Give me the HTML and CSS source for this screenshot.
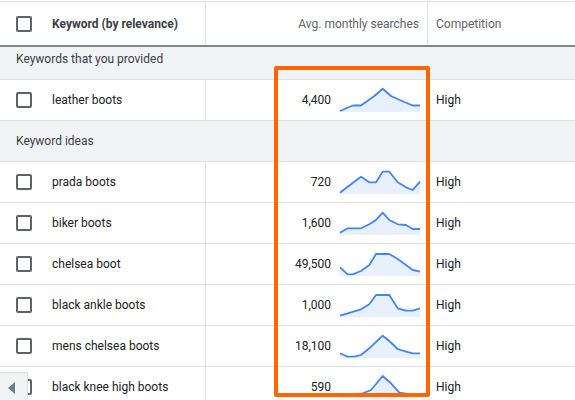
FILE: index.html
```html
<!DOCTYPE html>
<html lang="en">
<head>
<meta charset="UTF-8">
<title>Keyword ideas</title>
<link rel="stylesheet" href="styles.css">
</head>
<body>

<div class="table">
    <div class="row head">
        <div class="cell check"><span class="box"></span></div>
        <div class="cell kw">Keyword (by relevance)</div>
        <div class="cell searches">Avg. monthly searches</div>
        <div class="cell comp">Competition</div>
    </div>

    <div class="group first">Keywords that you provided</div>
    <div class="row">
        <div class="cell check"><span class="box"></span></div>
        <div class="cell kw">leather boots</div>
        <div class="cell searches">
            <span class="num">4,400</span>
            <svg class="spark" viewBox="0 0 80 24"><polygon points="0,23 12.7,17.5 21,17.5 34.3,8 42.7,0.8 51,8 64.3,14 72.7,17.5 80,17.5 80,24 0,24"/><polyline points="0,23 12.7,17.5 21,17.5 34.3,8 42.7,0.8 51,8 64.3,14 72.7,17.5 80,17.5"/></svg>
        </div>
        <div class="cell comp">High</div>
    </div>

    <div class="group">Keyword ideas</div>
    <div class="row">
        <div class="cell check"><span class="box"></span></div>
        <div class="cell kw">prada boots</div>
        <div class="cell searches">
            <span class="num">720</span>
            <svg class="spark" viewBox="0 0 80 24"><polygon points="0,22.7 7.7,16.7 21,6.7 29.3,12.3 36,12.3 42.7,1.7 49.3,1.7 57.7,12.3 66,17.3 72.7,20 80,11.7 80,24 0,24"/><polyline points="0,22.7 7.7,16.7 21,6.7 29.3,12.3 36,12.3 42.7,1.7 49.3,1.7 57.7,12.3 66,17.3 72.7,20 80,11.7"/></svg>
        </div>
        <div class="cell comp">High</div>
    </div>
    <div class="row">
        <div class="cell check"><span class="box"></span></div>
        <div class="cell kw">biker boots</div>
        <div class="cell searches">
            <span class="num">1,600</span>
            <svg class="spark" viewBox="0 0 80 24"><polygon points="0,21.7 7.7,17.3 21,17.3 29.3,13.3 36,9 42.7,1.7 49.3,9 57.7,13.3 66,14 72.7,18 80,18 80,24 0,24"/><polyline points="0,21.7 7.7,17.3 21,17.3 29.3,13.3 36,9 42.7,1.7 49.3,9 57.7,13.3 66,14 72.7,18 80,18"/></svg>
        </div>
        <div class="cell comp">High</div>
    </div>
    <div class="row">
        <div class="cell check"><span class="box"></span></div>
        <div class="cell kw">chelsea boot</div>
        <div class="cell searches">
            <span class="num">49,500</span>
            <svg class="spark" viewBox="0 0 80 24"><polygon points="0,15.3 7.7,22.3 12.7,22.3 21,19 29.3,13 36,2 49.3,2 57.7,7 66,13 72.7,18 80,19.7 80,24 0,24"/><polyline points="0,15.3 7.7,22.3 12.7,22.3 21,19 29.3,13 36,2 49.3,2 57.7,7 66,13 72.7,18 80,19.7"/></svg>
        </div>
        <div class="cell comp">High</div>
    </div>
    <div class="row">
        <div class="cell check"><span class="box"></span></div>
        <div class="cell kw">black ankle boots</div>
        <div class="cell searches">
            <span class="num">1,000</span>
            <svg class="spark" viewBox="0 0 80 24"><polygon points="0,22.7 7.7,20.3 21,16.3 29.3,11.3 36,2 49.3,2 57.7,15.3 66,17.7 72.7,17.7 80,15.3 80,24 0,24"/><polyline points="0,22.7 7.7,20.3 21,16.3 29.3,11.3 36,2 49.3,2 57.7,15.3 66,17.7 72.7,17.7 80,15.3"/></svg>
        </div>
        <div class="cell comp">High</div>
    </div>
    <div class="row">
        <div class="cell check"><span class="box"></span></div>
        <div class="cell kw">mens chelsea boots</div>
        <div class="cell searches">
            <span class="num">18,100</span>
            <svg class="spark" viewBox="0 0 80 24"><polygon points="0,19.3 7.7,22.7 14.3,22.7 21,21 29.3,14.3 42.7,1.7 49.3,7 57.7,15 66,17.7 72.7,19.3 80,19.3 80,24 0,24"/><polyline points="0,19.3 7.7,22.7 14.3,22.7 21,21 29.3,14.3 42.7,1.7 49.3,7 57.7,15 66,17.7 72.7,19.3 80,19.3"/></svg>
        </div>
        <div class="cell comp">High</div>
    </div>
    <div class="row">
        <div class="cell check"><span class="box"></span></div>
        <div class="cell kw">black knee high boots</div>
        <div class="cell searches">
            <span class="num">590</span>
            <svg class="spark" viewBox="0 0 80 24"><polygon points="0,19.5 11,19.3 22.7,18.3 31,15 42.7,1 51,8.3 59.3,17.7 67.7,19 80,19 80,24 0,24"/><polyline points="0,19.5 11,19.3 22.7,18.3 31,15 42.7,1 51,8.3 59.3,17.7 67.7,19 80,19"/></svg>
        </div>
        <div class="cell comp">High</div>
    </div>
</div>

<!-- annotation drawn over the searches column -->
<div class="highlight"></div>

<button class="scroll-left" aria-label="Scroll left"></button>

</body>
</html>
```

FILE: styles.css
```css
body {
    margin: 0;
    font-family: Roboto, "Liberation Sans", Arial, sans-serif;
    font-size: 12px;
    color: #3c4043;
    background: #ffffff;
    overflow: hidden;
}
.table {
    margin-top: 1px;
    border-top: 1px solid #e0e0e0;
}
.row {
    display: grid;
    grid-template-columns: 52px 154px 222px 1fr;
    height: 40px;
    border-bottom: 1px solid #e0e0e0;
}
.row.head {
    height: 43px;
    border-bottom: 2px solid #80868b;
}
.cell {
    display: flex;
    align-items: center;
    white-space: nowrap;
}
.check {
    padding-left: 16px;
}
.box {
    width: 12px;
    height: 12px;
    border: 2px solid #5f6368;
    border-radius: 2px;
}
.kw {
    border-right: 1px solid #e0e0e0;
    color: #202124;
}
.head .kw {
    font-weight: bold;
    color: #3c4043;
}
.searches {
    justify-content: flex-end;
    padding-right: 8px;
}
.head .searches {
    border-right: 1px solid #e0e0e0;
    color: #5f6368;
}
.num {
    margin-right: 9px;
    color: #202124;
}
.spark {
    width: 80px;
    height: 24px;
    overflow: visible;
}
.spark polygon {
    fill: #e8f0fe;
}
.spark polyline {
    fill: none;
    stroke: #4285f4;
    stroke-width: 1.8;
    stroke-linejoin: round;
}
.comp {
    padding-left: 8px;
    color: #202124;
}
.head .comp {
    color: #5f6368;
}
.group {
    background: #f1f3f4;
    height: 40px;
    line-height: 40px;
    padding-left: 16px;
    border-bottom: 1px solid #e0e0e0;
    color: #3c4043;
}
.group.first {
    height: 32px;
    line-height: 24px;
}
.highlight {
    position: absolute;
    left: 274px;
    top: 66px;
    width: 148px;
    height: 323px;
    border: 4px solid #ff6600;
    border-radius: 2px;
}
.scroll-left {
    position: absolute;
    left: 0;
    top: 372px;
    width: 28px;
    height: 30px;
    padding: 0;
    background: #f1f3f4;
    border: 1px solid #dadce0;
    border-left: none;
    border-top-right-radius: 2px;
}
.scroll-left::before {
    content: "";
    position: absolute;
    left: 8px;
    top: 9px;
    border-top: 6px solid transparent;
    border-bottom: 6px solid transparent;
    border-right: 7px solid #6b7c8e;
}
```
